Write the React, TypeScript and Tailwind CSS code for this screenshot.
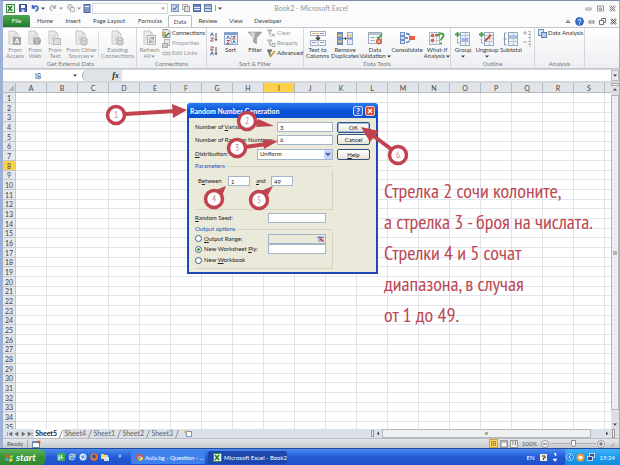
import type { ReactNode } from "react"
import clsx from "clsx"

const COLUMNS = "ABCDEFGHIJKLMNOPQRS".split("")
const ROWS = Array.from({ length: 35 }, (_, i) => i + 1)
const TABS = [
    { name: "Home", width: "w-[30px]" },
    { name: "Insert", width: "w-[26px]" },
    { name: "Page Layout", width: "w-[46px]" },
    { name: "Formulas", width: "w-[36px]" },
    { name: "Data", width: "w-[24px]" },
    { name: "Review", width: "w-[32px]" },
    { name: "View", width: "w-[24px]" },
    { name: "Developer", width: "w-[40px]" },
]
const SHEETS = ["Sheet5", "Sheet4", "Sheet1", "Sheet2", "Sheet3"]

function Svg({ w = 14, h = 14, children }: { w?: number, h?: number, children: ReactNode }) {
    return (
        <svg width={w} height={h} viewBox={`0 0 ${w} ${h}`} fill="none" className="shrink-0" aria-hidden="true">
            {children}
        </svg>
    )
}

function Caret({ dim = false }: { dim?: boolean }) {
    return <Svg w={4} h={3}><path d="M0 0.5h4L2 2.7z" fill={dim ? "#999" : "#444"} /></Svg>
}

/* ---------- ribbon icons ---------- */

function PageIcon({ kind }: { kind: string }) {
    return (
        <Svg w={14} h={16}>
            <path d="M1 1h6l3 3v10H1z" fill="#ececec" stroke="#c6c6c6" />
            <path d="M7 1v3h3M3 6h5M3 8h5M3 10h5" stroke="#cecece" />
            {kind === "access" && <>
                <rect x="5" y="7" width="8" height="8" fill="#a3a3a3" />
                <path d="M7 13.5l2-5 2 5M7.7 12h2.6" stroke="#fff" />
            </>}
            {kind === "web" && <>
                <circle cx="9" cy="11" r="4" fill="#a8a8a8" />
                <path d="M6 9c2 2 4 2 6 0M9 7v8" stroke="#ccc" />
            </>}
            {kind === "text" && <rect x="5.500" y="8.500" width="7" height="6" fill="#dedede" stroke="#b8b8b8" />}
            {kind === "db" && <>
                <path d="M6 9v5c0 1.300 6 1.300 6 0V9" fill="#d2d2d2" stroke="#b0b0b0" />
                <ellipse cx="9" cy="9" rx="3" ry="1.300" fill="#e8e8e8" stroke="#b0b0b0" />
            </>}
            {kind === "refresh" && <>
                <rect x="4.500" y="5.500" width="8" height="9" fill="#ececec" stroke="#b5b5b5" />
                <path d="M6.300 9.500a2.300 2.300 0 0 1 4-1M10.800 10.500a2.300 2.300 0 0 1-4 1M10.500 7v2H8.500M6.500 13v-2h2" stroke="#909090" />
            </>}
        </Svg>
    )
}

function SortIcon({ down = false }: { down?: boolean }) {
    return (
        <Svg w={8} h={10}>
            <path d={down ? "M.5 1h3l-3 3h3" : "M.5 4.300L2 .700l1.500 3.600"} stroke={down ? "#a3455c" : "#3e66a5"} />
            <path d={down ? "M.5 9.300L2 5.700l1.500 3.600" : "M.5 6h3l-3 3h3"} stroke={down ? "#3e66a5" : "#a3455c"} />
            <path d="M6 1v7M4.800 7L6 8.700 7.200 7" stroke="#555" />
        </Svg>
    )
}

function SortDialogIcon() {
    return (
        <Svg>
            <rect x=".5" y="1.500" width="13" height="12" fill="#eef3fb" stroke="#8da4c9" />
            <path d="M1 3h12" stroke="#7f9cd0" strokeWidth="2" />
            <path d="M7 3v10" stroke="#8da4c9" />
            <path d="M2.500 8L4 5l1.500 3M8.500 12.500L10 9.500l1.500 3" stroke="#4a70ad" />
            <path d="M2.500 9.500h3l-3 3h3M8.500 5.500h3l-3 2.500h3" stroke="#b9545d" />
        </Svg>
    )
}

function FilterIcon() {
    return (
        <Svg w={16} h={14}>
            <path d="M1 1h14l-5.500 6v6L6.500 11V7z" fill="#a3a3a3" stroke="#909090" strokeWidth=".5" />
            <path d="M3 1.500h5L7 8z" fill="#dcdcdc" />
        </Svg>
    )
}

function TextColumnsIcon() {
    return (
        <Svg w={16} h={16}>
            <rect x=".5" y="1.500" width="15" height="4" fill="#fff" stroke="#a3afc0" />
            <path d="M2 3.500h7" stroke="#e0b94e" />
            <path d="M10 3.500h4M2 12.500h4M10 12.500h4" stroke="#7d9bcf" />
            <path d="M8 5v4M6 7.500L8 10l2-2.500" stroke="#444" strokeWidth="1.300" />
            <rect x=".5" y="10.500" width="15" height="5" stroke="#a3afc0" />
            <path d="M8 11v4" stroke="#a3afc0" />
        </Svg>
    )
}

function DuplicatesIcon() {
    return (
        <Svg w={16} h={14}>
            <rect x=".5" y="1.500" width="5" height="12" fill="#6f92cb" stroke="#6b84b2" />
            <path d="M1 4.500h4M1 10.500h4" stroke="#e6cd72" strokeWidth="2" />
            <rect x="10.500" y="1.500" width="5" height="12" fill="#e5ecf7" stroke="#95a8c7" />
            <path d="M11 4.500h4" stroke="#e6cd72" strokeWidth="2" />
            <path d="M11 7.500h4" stroke="#6f92cb" strokeWidth="2" />
            <path d="M6 7.500h3M8 6l1.500 1.500L8 9" stroke="#555" />
        </Svg>
    )
}

function ValidationIcon() {
    return (
        <Svg w={15} h={14}>
            <rect x=".5" y="1.500" width="13" height="11" fill="#f5f6f8" stroke="#a2adbc" />
            <path d="M1 3h12" stroke="#b6c1d1" strokeWidth="2" />
            <path d="M2 6.500h5M2 9.500h5" stroke="#a5b2c2" />
            <path d="M9 6l1.500 1.500L14 3" stroke="#38a040" strokeWidth="1.500" />
            <circle cx="11" cy="10.500" r="3" fill="#d95f42" />
            <path d="M10 9.500l2 2M12 9.500l-2 2" stroke="#fff" />
        </Svg>
    )
}

function ConsolidateIcon() {
    return (
        <Svg w={16} h={14}>
            <rect x="1.500" y="1.500" width="4" height="3" fill="#dbe6f7" stroke="#708fc5" />
            <rect x="1.500" y="5.500" width="4" height="3" fill="#dbe6f7" stroke="#708fc5" />
            <rect x="1.500" y="9.500" width="4" height="3" fill="#dbe6f7" stroke="#708fc5" />
            <path d="M7 2.500c2 0 3 .5 4 2M7 11.500c2 0 3-.5 4-2M6 7h3" stroke="#4770c0" strokeWidth="1.300" />
            <rect x="10" y="5" width="6" height="4" fill="#e2604a" />
        </Svg>
    )
}

function WhatIfIcon() {
    return (
        <Svg w={16} h={15}>
            <rect x=".5" y="1.500" width="10" height="12" fill="#f3f4f6" stroke="#aab4c1" />
            <path d="M1 5.500h9M1 9.500h9M4 2v11M7.500 2v11" stroke="#c1cad5" />
            <rect x="2" y="3" width="3" height="3" fill="#df5f4b" />
            <rect x="2" y="8" width="3" height="3" fill="#df5f4b" />
            <rect x="6" y="3" width="3" height="2" fill="#df5f4b" />
            <path d="M9.500 5c0-3.500 5-3 5-.3 0 2-2.500 2-2.500 4.800M12 11.500v2" stroke="#3fa149" strokeWidth="1.900" />
        </Svg>
    )
}

function OutlineIcon({ kind }: { kind: string }) {
    return (
        <Svg w={16} h={15}>
            <rect x="5.500" y="1.500" width="9" height="13" fill="#eef3fa" stroke="#9aaac2" />
            <path d="M6 4.500h8M6 7.500h8M6 10.500h8M10.500 2v12" stroke="#b1c0d6" />
            {kind === "group" && <path d="M7 7h6v3H7z" fill="#93b3e3" />}
            {kind === "subtotal" && <path d="M6 4h8v3H6z" fill="#a9c2e8" />}
            {kind === "ungroup" && <path d="M6 10l6-6" stroke="#d04a35" strokeWidth="1.800" />}
            {kind === "subtotal"
                ? <path d="M3.500 2h-2v12h2M.5 8h3" stroke="#8493ab" />
                : <path d="M0 3.500h5M2.500 1v5" stroke="#48a04d" strokeWidth="1.800" />}
            {kind !== "subtotal" && <path d="M2.500 7v5h2" stroke="#9ba6b5" />}
        </Svg>
    )
}

function SmallIcon({ kind }: { kind: string }) {
    return (
        <Svg w={9} h={9}>
            {kind === "connections" && <>
                <path d="M1 .5h5l2 2v6H1z" fill="#e9edf2" stroke="#8a93a0" />
                <rect x="0" y="3" width="4" height="4" fill="#c7ab62" />
                <path d="M3 8l4-4" stroke="#3a7d49" strokeWidth="1.500" />
            </>}
            {kind === "properties" && <>
                <rect x="2.500" y=".5" width="5" height="6" fill="#e8e8e8" stroke="#b5b5b5" />
                <rect x=".5" y="4.500" width="5" height="4" fill="#ccc" stroke="#aaa" />
            </>}
            {kind === "links" && <>
                <ellipse cx="2.500" cy="4.500" rx="2" ry="1.300" stroke="#a5a5a5" />
                <ellipse cx="6.500" cy="4.500" rx="2" ry="1.300" stroke="#a5a5a5" />
            </>}
            {(kind === "clear" || kind === "reapply") && <>
                <path d="M0 1h5L3 3.500V7" fill="#ccc" stroke="#aaa" />
                <path d={kind === "clear" ? "M4.500 4.500l3.500 3M8 4.500l-3.500 3" : "M5 4.500h3v3H5z"} stroke="#a2a2a2" />
            </>}
            {kind === "advanced" && <>
                <path d="M0 1h5L3 3.500V7" fill="#777" stroke="#666" />
                <path d="M3 8l5-6" stroke="#c59b2d" strokeWidth="1.800" />
            </>}
            {kind === "analysis" && <>
                <rect x=".5" y=".5" width="5" height="6" fill="#dfe9f7" stroke="#6f8ebf" />
                <rect x="3.500" y="3.500" width="5" height="5" fill="#bcd0ec" stroke="#5c7db4" />
            </>}
        </Svg>
    )
}

function BigButton({ icon, lines, width, dim = false, caret = false }
    : { icon: ReactNode, lines: string[], width: string, dim?: boolean, caret?: boolean }) {
    return (
        <button type="button" className={clsx("flex flex-col items-center pt-[2px] shrink-0 whitespace-nowrap leading-[6px]", width, dim ? "text-[#909090]" : "text-[#3c3c3c]")}>
            <span className="flex h-[16px] items-center">{icon}</span>
            <span className="mt-px">{lines[0]}</span>
            <span className="flex items-center gap-px h-[6px]">
                {lines[1]}
                {caret && <Caret dim={dim} />}
            </span>
        </button>
    )
}

function SmallButton({ kind, label, dim = false }: { kind: string, label: string, dim?: boolean }) {
    return (
        <button type="button" className={clsx("flex items-center gap-px h-[10px] whitespace-nowrap", dim ? "text-[#999]" : "text-[#333]")}>
            <SmallIcon kind={kind} />
            {label}
        </button>
    )
}

function Group({ label, width, children }: { label: string, width: string, children: ReactNode }) {
    return (
        <section className={clsx("flex flex-col shrink-0 border-r border-[#d3d6da]", width)}>
            <div className="flex flex-1">{children}</div>
            <p className="h-[8px] leading-[7px] text-center text-[#777]">{label}</p>
        </section>
    )
}

function Divider() {
    return <div className="w-px my-[3px] bg-[#dcdfe2]" />
}

function Ribbon() {
    return (
        <div className="flex h-[42px] pl-[2px] overflow-hidden border-y border-[#c3c7cc] bg-linear-to-b from-white to-[#eceef1]">
            <Group label="Get External Data" width="w-[132px]">
                <BigButton icon={<PageIcon kind="access" />} lines={["From", "Access"]} width="w-[20px]" dim />
                <BigButton icon={<PageIcon kind="web" />} lines={["From", "Web"]} width="w-[20px]" dim />
                <BigButton icon={<PageIcon kind="text" />} lines={["From", "Text"]} width="w-[20px]" dim />
                <BigButton icon={<PageIcon kind="db" />} lines={["From Other", "Sources"]} width="w-[33px]" dim caret />
                <Divider />
                <BigButton icon={<PageIcon kind="db" />} lines={["Existing", "Connections"]} width="w-[37px]" dim />
            </Group>
            <Group label="Connections" width="w-[70px]">
                <BigButton icon={<PageIcon kind="refresh" />} lines={["Refresh", "All"]} width="w-[25px]" dim caret />
                <div className="flex flex-col">
                    <SmallButton kind="connections" label="Connections" />
                    <SmallButton kind="properties" label="Properties" dim />
                    <SmallButton kind="links" label="Edit Links" dim />
                </div>
            </Group>
            <Group label="Sort & Filter" width="w-[97px]">
                <div className="flex flex-col gap-1 pt-1 pl-[3px]">
                    <button type="button" aria-label="Sort A to Z"><SortIcon /></button>
                    <button type="button" aria-label="Sort Z to A"><SortIcon down /></button>
                </div>
                <BigButton icon={<SortDialogIcon />} lines={["Sort"]} width="w-[25px]" />
                <Divider />
                <BigButton icon={<FilterIcon />} lines={["Filter"]} width="w-[24px]" />
                <div className="flex flex-col">
                    <SmallButton kind="clear" label="Clear" dim />
                    <SmallButton kind="reapply" label="Reapply" dim />
                    <SmallButton kind="advanced" label="Advanced" />
                </div>
            </Group>
            <Group label="Data Tools" width="w-[147px]">
                <BigButton icon={<TextColumnsIcon />} lines={["Text to", "Columns"]} width="w-[27px]" />
                <BigButton icon={<DuplicatesIcon />} lines={["Remove", "Duplicates"]} width="w-[28px]" />
                <BigButton icon={<ValidationIcon />} lines={["Data", "Validation"]} width="w-[32px]" caret />
                <BigButton icon={<ConsolidateIcon />} lines={["Consolidate"]} width="w-[32px]" />
                <BigButton icon={<WhatIfIcon />} lines={["What-If", "Analysis"]} width="w-[28px]" caret />
            </Group>
            <Group label="Outline" width="w-[84px]">
                <BigButton icon={<OutlineIcon kind="group" />} lines={["Group"]} width="w-[24px]" caret />
                <BigButton icon={<OutlineIcon kind="ungroup" />} lines={["Ungroup"]} width="w-[24px]" caret />
                <BigButton icon={<OutlineIcon kind="subtotal" />} lines={["Subtotal"]} width="w-[24px]" />
                <div className="pt-[2px]">
                    <Svg w={9} h={18}>
                        <path d="M0 3h4M2 1v4M0 12h4" stroke="#aaa" />
                        <path d="M5 1.500h3M5 4.500h3M5 7.500h3M5 11.500h3M5 14.500h3M7 1v16" stroke="#bbb" />
                    </Svg>
                </div>
            </Group>
            <Group label="Analysis" width="w-[50px]">
                <div className="pl-[3px]"><SmallButton kind="analysis" label="Data Analysis" /></div>
            </Group>
        </div>
    )
}

/* ---------- title, tabs, formula bar ---------- */

function ExcelLogo() {
    return (
        <Svg w={9} h={9}>
            <rect x=".5" y=".5" width="8" height="8" fill="#e6f3e4" stroke="#3d8c41" />
            <path d="M2 2l4 5M6 2L2 7" stroke="#23792b" strokeWidth="1.500" />
        </Svg>
    )
}

function WindowButtons({ dark = false }: { dark?: boolean }) {
    const stroke = dark ? "#666" : "#888"
    return (
        <>
            <button type="button" aria-label="Minimize"><Svg w={7} h={7}><rect x="1" y="3" width="5" height="2" stroke={stroke} strokeWidth=".8" /></Svg></button>
            <button type="button" aria-label="Restore">
                <Svg w={7} h={7}>
                    {dark
                        ? <path d="M2.500 2.500v-2h4v4h-2M.5 2.500h4v4h-4z" stroke={stroke} strokeWidth=".9" />
                        : <path d="M.5 1h6v5h-6zM2.500 3h2v1.500h-2z" stroke={stroke} strokeWidth=".9" />}
                </Svg>
            </button>
            <button type="button" aria-label="Close"><Svg w={7} h={7}><path d="M1 1l5 5M6 1L1 6" stroke={stroke} strokeWidth="2.200" /><path d="M1 1l5 5M6 1L1 6" stroke="#fff" strokeWidth=".7" /></Svg></button>
        </>
    )
}

function TitleBar() {
    return (
        <header className="flex items-center h-[14px] px-[3px]">
            <div className="flex flex-1 items-center">
                <ExcelLogo />
                <div className="flex items-center pl-1">
                    <Svg w={8} h={8}><path d="M.5.5h7v7h-7z" fill="#4a5fb5" stroke="#36489a" /><path d="M2 1h4v3H2z" fill="#fff" /><path d="M2.500 5.500h3V8h-3z" fill="#ccd3ee" /></Svg>
                    <div className="flex items-center gap-[2px] pl-1">
                        <Svg w={8} h={8}><path d="M1.500 1v3h3M2 3.500C4 1 7 2 7 4c0 1.500-1 2.500-2.500 3" stroke="#3f67b9" strokeWidth="1.600" /></Svg>
                        <Caret />
                    </div>
                    <div className="flex items-center gap-[2px] pl-1">
                        <Svg w={8} h={8}><path d="M6.500 1v3h-3M6 3.500C4 1 1 2 1 4c0 1.500 1 2.500 2.500 3" stroke="#b3b3b3" strokeWidth="1.300" /></Svg>
                        <Caret dim />
                    </div>
                    <div className="flex items-center gap-[2px] pl-1">
                        <Svg w={8} h={8}><circle cx="3" cy="3" r="2.500" fill="#ddd" stroke="#b3b3b3" /><path d="M3.500 3.500h4v4h-4z" fill="#eee" stroke="#b3b3b3" /></Svg>
                        <Caret dim />
                    </div>
                    <span className="pl-[2px]"><Svg w={8} h={9}><rect x="1" y=".5" width="6" height="8" fill="#7d93c2" stroke="#51699f" /><path d="M2 2.500h4" stroke="#fff" /></Svg></span>
                </div>
                <div className="flex w-[76px] ml-[1px] items-center border border-[#d3d6db] bg-white">
                    <select aria-label="Style" className="flex-1 h-[9px] appearance-none" />
                    <span className="pr-[2px]"><Caret dim /></span>
                </div>
                <div className="flex gap-[3px] pl-[3px]">
                    <Svg w={8} h={8}><rect x=".5" y=".5" width="7" height="7" fill="#c3d2e8" stroke="#7d96ba" /><path d="M2 4l1.500 2L6 2" stroke="#355a96" /></Svg>
                    <Svg w={8} h={8}><rect x=".5" y=".5" width="5" height="5" fill="#eee" stroke="#aaa" /><rect x="2.500" y="2.500" width="5" height="5" fill="#ddd" stroke="#999" /></Svg>
                    <Svg w={8} h={8}><rect x=".5" y=".5" width="7" height="7" fill="#6789c0" stroke="#4566a0" /><path d="M1 3.500h6M1 5.500h6" stroke="#e6edf7" /></Svg>
                    <Svg w={8} h={8}><rect x=".5" y=".5" width="7" height="7" fill="#ccd9ed" stroke="#5c7cac" /><path d="M1 2h6M1 4.500h6" stroke="#5c7cac" /></Svg>
                </div>
                <div className="h-[6px] w-px ml-[3px] bg-[#999]" />
                <span className="pl-[2px]"><Caret /></span>
            </div>
            <h1 className="text-[7px] leading-[14px] text-[#969696] whitespace-pre">Book2 - Microsoft Excel</h1>
            <div className="flex flex-1 items-center justify-end gap-[5px]">
                <WindowButtons />
            </div>
        </header>
    )
}

function TabBar() {
    return (
        <nav className="flex h-[12px] text-[#444]">
            <button type="button" className="w-[27px] bg-linear-to-b from-[#4fa64f] to-[#1d7d2c] text-white rounded-t-xs">File</button>
            {TABS.map(tab => (
                <button
                    key={tab.name}
                    type="button"
                    className={clsx("whitespace-nowrap", tab.width, tab.name === "Data" && "bg-white border-x border-t border-[#b9bec5] rounded-t-xs")}
                >
                    {tab.name}
                </button>
            ))}
            <div className="flex flex-1 items-center justify-end gap-[4px] pr-[2px]">
                <Svg w={6} h={6}><path d="M1 4.500L3 2l2 2.500z" stroke="#777" /></Svg>
                <Svg w={9} h={9}>
                    <circle cx="4.500" cy="4.500" r="4" fill="#3470c8" stroke="#2458a8" strokeWidth=".7" />
                    <path d="M3.200 3.500c0-1.700 2.700-1.500 2.700 0 0 1-1.400 1-1.400 2.200M4.500 6.500v1" stroke="#fff" />
                </Svg>
                <WindowButtons dark />
            </div>
        </nav>
    )
}

function FormulaBar() {
    return (
        <div className="flex h-[11px] mt-px bg-white">
            <input aria-label="Name Box" defaultValue="I8" className="w-[70px] text-center text-[7px] text-[#333]" />
            <span className="flex w-[9px] items-center"><Caret /></span>
            <div className="flex items-center justify-end w-[40px] pr-[3px] rounded-l-full bg-[#dfe2e6] border-l border-[#aaaeb4] font-['Liberation_Serif',serif] text-[8px] leading-[10px] italic font-bold text-[#222]">fx</div>
            <input aria-label="Formula" className="flex-1 min-w-0 bg-white" />
            <button type="button" aria-label="Expand formula bar" className="flex w-[8px] items-center justify-center border border-[#b7bbc1] bg-[#e8eaed]"><Caret /></button>
        </div>
    )
}

/* ---------- sheet ---------- */

function Sheet() {
    return (
        <div className="flex flex-1 min-h-0 mt-[2px]">
            <div className="flex-1 min-w-0 overflow-hidden bg-white">
                <table className="w-full table-fixed border-separate border-spacing-0 text-[7px] leading-[8px] text-[#444]">
                    <colgroup>
                        <col className="w-[13px]" />
                        {COLUMNS.map(col => <col key={col} className="w-[31px]" />)}
                        <col />
                    </colgroup>
                    <thead>
                        <tr>
                            <th className="h-[10px] p-0 bg-[#dfe2e6] border-r border-b border-[#b5bac1]">
                                <span className="flex justify-end pr-px"><Svg w={6} h={6}><path d="M6 0v6H0z" fill="#b4b9c1" /></Svg></span>
                            </th>
                            {COLUMNS.map(col => (
                                <th key={col} scope="col" className={clsx("p-0 font-normal border-r border-b border-[#b5bac1]", col === "I" ? "bg-[#fbd148]" : "bg-[#e1e4e8]")}>
                                    {col}
                                </th>
                            ))}
                            <th className="p-0 border-b border-[#b5bac1] bg-[#e1e4e8]" />
                        </tr>
                    </thead>
                    <tbody>
                        {ROWS.map(row => (
                            <tr key={row} className="h-[10px] nth-[3n]:h-[9px]">
                                <th scope="row" className={clsx("p-0 font-normal border-r border-b border-[#c3c7cd]", row === 8 ? "bg-[#fbd148]" : "bg-[#e6e8eb]")}>
                                    {row}
                                </th>
                                {COLUMNS.map(col => <td key={col} className="p-0 border-r border-b border-[#e1e4ea]" />)}
                                <td className="p-0 border-b border-[#e1e4ea]" />
                            </tr>
                        ))}
                    </tbody>
                </table>
            </div>
            <div className="flex flex-col w-[8px] bg-[#dcdfe3]">
                <div className="h-[3px] border border-[#aaa] bg-[#eee]" />
                <button type="button" aria-label="Scroll up" className="flex h-[8px] items-center justify-center rotate-180"><Caret /></button>
                <div className="flex flex-1 mt-px items-center justify-center border border-[#b3b7bd] bg-[#eceef0]">
                    <div className="size-[4px] bg-[#b3b3b3]" />
                </div>
                <div className="h-[10px] bg-[#dcdfe3]" />
                <button type="button" aria-label="Scroll down" className="flex h-[9px] items-center justify-center"><Caret /></button>
            </div>
        </div>
    )
}

function SheetTabs() {
    return (
        <div className="flex h-[9px] text-[7px] leading-[9px] bg-[#dbe1e8] text-[#666]">
            <div className="w-[31px] flex items-center justify-around">
                <Svg w={28} h={6}>
                    <path d="M2.500 1v4M7 1L4 3l3 2zM13 1l-3 2 3 2zM17 1l3 2-3 2zM23 1l3 2-3 2zM27 1v4" fill="#666" stroke="#666" strokeWidth=".5" />
                </Svg>
            </div>
            {SHEETS.map((name, i) => (
                <button key={name} type="button" className={clsx("flex w-[29px] items-center justify-end gap-[2px]", i === 0 && "bg-white font-bold text-[#222]")}>
                    {name}
                    <Svg w={4} h={8}><path d="M.5 8L3.500 0" stroke="#8b919a" /></Svg>
                </button>
            ))}
            <button type="button" aria-label="Insert Worksheet" className="pl-[5px]">
                <Svg w={9} h={8}><rect x="2.500" y="1.500" width="5" height="5" fill="#fff" stroke="#7894c5" /><path d="M0 2h4M2 0v4" stroke="#e2a13a" /></Svg>
            </button>
            <div className="flex-1" />
            <div className="w-[3px] my-px border border-[#999] bg-[#eee]" />
            <button type="button" aria-label="Scroll left" className="flex w-[8px] items-center justify-center rotate-90"><Caret /></button>
            <div className="flex w-[34%] items-center justify-center border border-[#b3b7bd] bg-[#eef0f2]">
                <div className="size-[3px] bg-[#aaa]" />
            </div>
            <div className="w-[12px]" />
            <button type="button" aria-label="Scroll right" className="flex w-[8px] items-center justify-center -rotate-90"><Caret /></button>
            <div className="w-[3px] mx-px border border-[#999] bg-[#eee]" />
            <div className="w-[3px]" />
        </div>
    )
}

function StatusBar() {
    return (
        <footer className="flex items-center h-[10px] px-[4px] border-t border-[#b9bdc3] bg-linear-to-b from-[#e6e8ea] to-[#c6c9cd] text-[#555]">
            <span>Ready</span>
            <div className="w-px h-[8px] mx-[4px] bg-[#aaa]" />
            <Svg w={9} h={8}><rect x=".5" y="1.500" width="7" height="6" fill="#fff" stroke="#6a86b5" /><path d="M1 2.500h6" stroke="#6a86b5" /><circle cx="7" cy="2" r="1.500" fill="#cf4f3c" /></Svg>
            <div className="flex-1" />
            <div className="flex items-center gap-[2px]">
                <span className="flex p-px bg-[#ffd766] border border-[#d5a52b]"><Svg w={5} h={5}><path d="M0 .5h5M0 2.500h5M0 4.500h5M.5 0v5M2.500 0v5M4.500 0v5" stroke="#927a3a" strokeWidth=".6" /></Svg></span>
                <Svg w={8} h={8}><rect x=".5" y=".5" width="7" height="7" fill="#bbb" stroke="#999" /><path d="M2 3h4v3H2z" fill="#fff" /></Svg>
                <Svg w={8} h={8}><rect x=".5" y=".5" width="7" height="7" fill="#eee" stroke="#999" /><path d="M3 1v4M5.500 1v4" stroke="#888" /></Svg>
            </div>
            <span className="px-[4px]">100%</span>
            <button type="button" aria-label="Zoom out" className="flex"><Svg w={8} h={8}><circle cx="4" cy="4" r="3.500" fill="#f3f3f3" stroke="#888" strokeWidth=".8" /><path d="M2 4h4" stroke="#555" /></Svg></button>
            <input
                aria-label="Zoom"
                type="range"
                className="w-[46px] h-[8px] mx-px appearance-none bg-[linear-gradient(#b3b3b3,#b3b3b3)] bg-[length:100%_1px] bg-center bg-no-repeat [&::-webkit-slider-thumb]:appearance-none [&::-webkit-slider-thumb]:w-[5px] [&::-webkit-slider-thumb]:h-[7px] [&::-webkit-slider-thumb]:rounded-b-sm [&::-webkit-slider-thumb]:border [&::-webkit-slider-thumb]:border-[#888] [&::-webkit-slider-thumb]:bg-white"
            />
            <button type="button" aria-label="Zoom in" className="flex"><Svg w={8} h={8}><circle cx="4" cy="4" r="3.500" fill="#f3f3f3" stroke="#888" strokeWidth=".8" /><path d="M2 4h4M4 2v4" stroke="#555" /></Svg></button>
            <span className="pl-[5px]"><Svg w={5} h={6}><path d="M1 5h1M3 5h1M3 3h1" stroke="#888" /></Svg></span>
        </footer>
    )
}

/* ---------- dialog ---------- */

const field = "border border-[#a3b5c9] bg-white px-[2px] text-[#222] leading-[8px] h-[10px] min-w-0"

function DialogButton({ children, primary = false }: { children: ReactNode, primary?: boolean }) {
    return (
        <button type="button" className={clsx("w-[33px] h-[11px] shrink-0 rounded-xs border border-[#33527c] bg-linear-to-b from-white to-[#e6e4d8] leading-[9px]", primary && "inset-ring inset-ring-[#9db9ea]")}>
            {children}
        </button>
    )
}

function Radio({ id, label, checked = false }: { id: string, label: ReactNode, checked?: boolean }) {
    return (
        <div className="flex w-[73px] items-center gap-[2px]">
            <input
                id={id}
                type="radio"
                name="output"
                defaultChecked={checked}
                className="appearance-none size-[7px] shrink-0 rounded-full border border-[#3c5f86] bg-white checked:bg-[radial-gradient(#2fa02f_30%,#fff_45%)]"
            />
            <label htmlFor={id} className="whitespace-nowrap">{label}</label>
        </div>
    )
}

function RandomDialog() {
    return (
        <div role="dialog" aria-labelledby="dialog-title" className="absolute left-[187px] top-[103px] w-[191px] rounded-t-sm border-2 border-t-0 border-[#1f48b4] bg-[#ebe9d9] text-[#222] leading-[8px]">
            <div className="flex items-center h-[15px] -mx-[2px] px-[3px] gap-[2px] rounded-t-sm bg-linear-to-b from-[#2b7bf0] via-[#0a54d8] to-[#0b50d0]">
                <h2 id="dialog-title" className="flex-1 text-[7px] font-bold text-white whitespace-nowrap">Random Number Generation</h2>
                <button type="button" aria-label="Help" className="flex size-[10px] items-center justify-center rounded-xs border border-[#c5d6f6] bg-[#2f66da] text-white font-bold text-[8px]">?</button>
                <button type="button" aria-label="Close" className="flex size-[10px] items-center justify-center rounded-xs border border-[#f0c8bc] bg-[#d9502e]">
                    <Svg w={6} h={6}><path d="M1 1l4 4M5 1L1 5" stroke="#fff" strokeWidth="1.200" /></Svg>
                </button>
            </div>
            <form className="flex flex-col px-[6px] pt-[3px] pb-[3px]">
                <div className="flex items-center h-[12px]">
                    <label htmlFor="variables" className="w-[82px] whitespace-nowrap">Number of <u>V</u>ariables:</label>
                    <input id="variables" defaultValue="3" className={clsx(field, "w-[56px]")} />
                    <div className="flex-1" />
                    <DialogButton primary>OK</DialogButton>
                </div>
                <div className="flex items-center h-[13px]">
                    <label htmlFor="numbers" className="w-[82px] whitespace-nowrap">Number of Random Num<u>b</u>ers:</label>
                    <input id="numbers" defaultValue="6" className={clsx(field, "w-[56px]")} />
                    <div className="flex-1" />
                    <DialogButton>Cancel</DialogButton>
                </div>
                <div className="flex items-center h-[16px]">
                    <label htmlFor="distribution" className="w-[62px]"><u>D</u>istribution:</label>
                    <div className="relative w-[76px] h-[11px]">
                        <select id="distribution" className="w-full h-[11px] appearance-none border border-[#a3b5c9] bg-white px-[2px] leading-[8px] text-[#222]">
                            <option>Uniform</option>
                        </select>
                        <span className="absolute right-px top-px flex w-[8px] h-[9px] items-center justify-center rounded-xs bg-[#c3d3fb] pointer-events-none">
                            <Svg w={6} h={5}><path d="M1 1l2 2 2-2" stroke="#31497c" strokeWidth="1.300" /></Svg>
                        </span>
                    </div>
                    <div className="flex-1" />
                    <DialogButton><u>H</u>elp</DialogButton>
                </div>
                <fieldset className="w-[138px]">
                    <div className="flex items-center h-[8px]">
                        <legend className="pr-[2px] text-[#1e50b8]">Parameters</legend>
                        <div className="flex-1 h-px bg-[#d6d3c0]" />
                    </div>
                    <div className="flex items-start h-[40px] pt-[6px] pl-[3px] border-b border-r border-[#d6d3c0]">
                        <label htmlFor="from" className="w-[30px] pt-px">B<u>e</u>tween</label>
                        <input id="from" defaultValue="1" className={clsx(field, "w-[22px]")} />
                        <label htmlFor="to" className="w-[21px] pl-[6px] pt-px"><u>a</u>nd</label>
                        <input id="to" defaultValue="49" className={clsx(field, "w-[22px]")} />
                    </div>
                </fieldset>
                <div className="flex items-center h-[14px] mt-px">
                    <label htmlFor="seed" className="w-[73px]"><u>R</u>andom Seed:</label>
                    <input id="seed" className={clsx(field, "w-[58px]")} />
                </div>
                <fieldset className="w-[138px]">
                    <div className="flex items-center h-[8px]">
                        <legend className="pr-[2px] text-[#1e50b8]">Output options</legend>
                        <div className="flex-1 h-px bg-[#d6d3c0]" />
                    </div>
                    <div className="flex flex-col pb-[2px] border-b border-r border-[#d6d3c0]">
                        <div className="flex items-center h-[11px]">
                            <Radio id="range" label={<><u>O</u>utput Range:</>} />
                            <div className="flex w-[58px] h-[10px] items-center justify-end border border-[#a3b5c9] bg-[#ebe9d9]">
                                <Svg w={9} h={8}><rect x="1" y="1" width="7" height="6" fill="#c9d3ea" /><path d="M1 2.500h7M4 1v6" stroke="#6780b5" /><path d="M7.500 6.500L4 3.500" stroke="#c43b33" strokeWidth="1.500" /></Svg>
                            </div>
                        </div>
                        <div className="flex items-center h-[10px]">
                            <Radio id="worksheet" label={<>New Worksheet <u>P</u>ly:</>} checked />
                            <input aria-label="Worksheet name" className={clsx(field, "w-[58px]")} />
                        </div>
                        <div className="flex items-center h-[12px]">
                            <Radio id="workbook" label={<>New <u>W</u>orkbook</>} />
                        </div>
                    </div>
                </fieldset>
            </form>
        </div>
    )
}

/* ---------- annotations ---------- */

const MARKS = [
    { n: 1, x: 116, y: 115, line: "M125 114L176 111", head: "172,104 187,110 173,118" },
    { n: 2, x: 247, y: 121, line: "M255 122L264 124", head: "258,119 274,126 256,127" },
    { n: 3, x: 237, y: 148, line: "M245 147L267 144", head: "263,139 278,141 264,149" },
    { n: 4, x: 214, y: 199, line: "M219 193L221 191", head: "216,190 226,186 222,196" },
    { n: 5, x: 259, y: 200, line: "M264 194L267 191", head: "261,191 273,186 267,197" },
    { n: 6, x: 398, y: 155, line: "M391 149L371 134", head: "361,127 379,131 370,142" },
]

function Annotations() {
    return (
        <>
            <svg width="620" height="465" viewBox="0 0 620 465" className="absolute left-0 top-0 pointer-events-none" aria-hidden="true">
                {MARKS.map(m => (
                    <g key={m.n}>
                        <path d={m.line} stroke="#c0434f" strokeWidth="4" />
                        <polygon points={m.head} fill="#c0434f" />
                        <circle cx={m.x} cy={m.y} r="8.500" fill="#fff" stroke="#c0434f" strokeWidth="3.500" />
                        <text x={m.x} y={m.y + 3} textAnchor="middle" fontSize="9" fill="#c98388" className="font-['PT_Sans_Narrow','Open_Sans_Condensed','Roboto_Condensed',sans-serif]">{m.n}</text>
                    </g>
                ))}
            </svg>
            <div className="absolute left-[384px] top-[176px] text-[20px] leading-[31px] text-[#bb4752] whitespace-nowrap font-['PT_Sans_Narrow','Open_Sans_Condensed','Roboto_Condensed','Liberation_Sans_Narrow','Noto_Sans',sans-serif]">
                <p>Стрелка 2 сочи колоните,</p>
                <p>а стрелка 3 - броя на числата.</p>
                <p>Стрелки 4 и 5 сочат</p>
                <p>диапазона, в случая</p>
                <p>от 1 до 49.</p>
            </div>
        </>
    )
}

/* ---------- taskbar ---------- */

function Taskbar() {
    return (
        <div className="flex h-[16px] bg-linear-to-b from-[#4a8bf0] via-[#2359d6] to-[#1f52c8] text-white leading-[15px]">
            <button type="button" className="flex items-center gap-[2px] w-[46px] pl-[5px] rounded-r-md bg-linear-to-b from-[#5cb35a] via-[#379338] to-[#2f8a31] font-bold italic text-[10px]">
                <Svg w={9} h={9}>
                    <path d="M1 2q1.500-1 3 0L3.500 4.500q-1.500-1-3 0z" fill="#ee5b2c" />
                    <path d="M5 2q1.500 1 3.500 0L8 4.500q-2 1-3.500 0z" fill="#8fd04a" />
                    <path d="M.4 5.200q1.500-1 3 0L3 8q-1.500-1-3 0z" fill="#5b9cf5" />
                    <path d="M4.400 5.200q1.600 1 3.400 0L7.300 8q-2 1-3.400 0z" fill="#fbd343" />
                </Svg>
                start
            </button>
            <div className="flex items-center gap-[3px] pl-[11px]">
                <Svg w={8} h={8}><rect width="8" height="8" rx="1" fill="#3fae58" /><path d="M2 7V2M2 5h2.500V2M5 5h1" stroke="#fff" /></Svg>
                <Svg w={8} h={8}><path d="M6.500 5.500A2.800 2.800 0 1 1 7 4H2" stroke="#8fd0ff" strokeWidth="1.400" /><path d="M1 7Q3 2 8 1" stroke="#f3ca48" strokeWidth=".8" /></Svg>
                <Svg w={8} h={8}><circle cx="4" cy="4" r="3.500" fill="#dcebfb" /><path d="M2 3l4 2M3 6l2-4" stroke="#4c86cf" /></Svg>
                <Svg w={8} h={8}><circle cx="4" cy="4" r="3.800" fill="#e8772a" /><circle cx="4" cy="3.500" r="2" fill="#33559f" /></Svg>
                <Svg w={8} h={8}><path d="M0 1h3l1 1h3v4H0z" fill="#f4d77a" /><rect x="3" y="4" width="5" height="4" fill="#d4e6fa" /></Svg>
            </div>
            <div className="w-[22px] pl-[9px] text-[8px] leading-[12px]">»</div>
            <button type="button" className="flex w-[74px] mt-[2px] mb-px items-center gap-[2px] pl-[5px] rounded-xs bg-[#3f82ee] whitespace-nowrap">
                <Svg w={7} h={7}><circle cx="3.500" cy="3.500" r="3.500" fill="#dd4b3c" /><path d="M.5 5a3.500 3.500 0 0 0 3 2V3.500z" fill="#49a955" /><path d="M3.500 7A3.500 3.500 0 0 0 7 3H3.500z" fill="#f7d048" /><circle cx="3.500" cy="3.500" r="1.500" fill="#4a86ea" stroke="#fff" strokeWidth=".6" /></Svg>
                Aula.bg - Question - ...
            </button>
            <button type="button" className="flex w-[79px] ml-[3px] mt-[2px] mb-px items-center gap-[2px] pl-[5px] rounded-xs bg-[#1c47ad] whitespace-nowrap">
                <ExcelLogo />
                Microsoft Excel - Book2
            </button>
            <div className="flex-1" />
            <div className="flex items-center gap-[5px] pr-[7px]">
                <span>EN</span>
                <Svg w={7} h={7}><rect width="7" height="7" fill="#f3f0df" /><path d="M2 2h3v2H3.500v2" stroke="#333" /></Svg>
                <Svg w={6} h={10}><path d="M2 1.500h2v2H3M1 7h4L3 9.500z" fill="#fff" stroke="#fff" strokeWidth=".6" /></Svg>
            </div>
            <div className="flex items-center gap-[2px] pl-px pr-[5px] bg-linear-to-b from-[#3fb0f7] via-[#169bee] to-[#138be0]">
                <Svg w={8} h={8}><circle cx="4" cy="4" r="3.500" fill="#2b7fe4" stroke="#8cd0ff" /><path d="M5 2L3 4l2 2" stroke="#fff" /></Svg>
                <Svg w={9} h={9}><circle cx="4.500" cy="4.500" r="4" fill="#ee9a35" /><circle cx="4.500" cy="4.500" r="2" fill="#fff" /></Svg>
                <Svg w={8} h={8}><rect x="2.500" y=".5" width="5" height="4" fill="#2c4c92" stroke="#c4d4ea" /><rect x=".5" y="3.500" width="5" height="4" fill="#2c4c92" stroke="#c4d4ea" /></Svg>
                <span className="pl-[3px]">19:24</span>
            </div>
        </div>
    )
}

export default function App() {
    return (
        <div className="relative flex flex-col h-screen overflow-hidden bg-[#dfe3e8] font-['Lato','Open_Sans',sans-serif] text-[6px] leading-[8px]">
            <div className="flex flex-col flex-1 min-h-0 border-l-3 border-r border-t border-[#9db1d6] border-t-[#7d8cb0] bg-[#d3d6da]">
                <div className="bg-[#fbfbfc]">
                    <TitleBar />
                    <TabBar />
                    <Ribbon />
                </div>
                <FormulaBar />
                <Sheet />
                <SheetTabs />
                <StatusBar />
            </div>
            <div className="h-px bg-[#274a9c]" />
            <Taskbar />
            <RandomDialog />
            <Annotations />
        </div>
    )
}
